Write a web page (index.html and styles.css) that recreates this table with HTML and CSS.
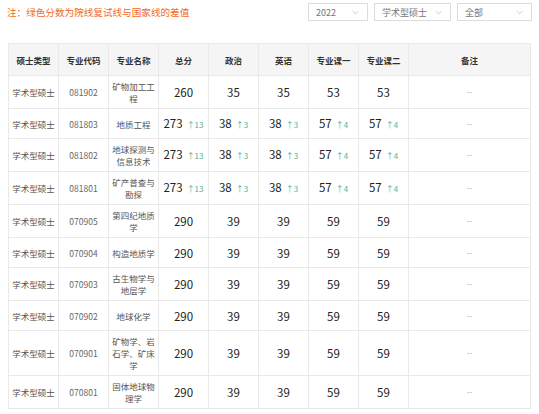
FILE: index.html
```html
<!DOCTYPE html>
<html lang="zh">
<head>
<meta charset="utf-8">
<link rel="stylesheet" href="styles.css">
</head>
<body>
<div class="topbar">
  <div class="note">注：绿色分数为院线复试线与国家线的差值</div>
  <div class="filters">
    <div class="select s1"><span>2022</span><svg class="chev" viewBox="0 0 10 6"><path d="M1 1 L5 5 L9 1" /></svg></div>
    <div class="select s2"><span>学术型硕士</span><svg class="chev" viewBox="0 0 10 6"><path d="M1 1 L5 5 L9 1" /></svg></div>
    <div class="select s3"><span>全部</span><svg class="chev" viewBox="0 0 10 6"><path d="M1 1 L5 5 L9 1" /></svg></div>
  </div>
</div>
<table class="scores">
  <colgroup>
    <col class="c"><col class="c"><col class="c"><col class="c"><col class="c"><col class="c"><col class="c"><col class="c"><col class="last">
  </colgroup>
  <thead>
    <tr><th>硕士类型</th><th>专业代码</th><th>专业名称</th><th>总分</th><th>政治</th><th>英语</th><th>专业课一</th><th>专业课二</th><th>备注</th></tr>
  </thead>
  <tbody>
    <tr><td>学术型硕士</td><td class="code">081902</td><td class="name">矿物加工工程</td><td class="num">260</td><td class="num">35</td><td class="num">35</td><td class="num">53</td><td class="num">53</td><td class="dash">--</td></tr>
    <tr><td>学术型硕士</td><td class="code">081803</td><td class="name">地质工程</td><td class="num">273<span class="up">↑13</span></td><td class="num">38<span class="up">↑3</span></td><td class="num">38<span class="up">↑3</span></td><td class="num">57<span class="up">↑4</span></td><td class="num">57<span class="up">↑4</span></td><td class="dash">--</td></tr>
    <tr><td>学术型硕士</td><td class="code">081802</td><td class="name">地球探测与信息技术</td><td class="num">273<span class="up">↑13</span></td><td class="num">38<span class="up">↑3</span></td><td class="num">38<span class="up">↑3</span></td><td class="num">57<span class="up">↑4</span></td><td class="num">57<span class="up">↑4</span></td><td class="dash">--</td></tr>
    <tr><td>学术型硕士</td><td class="code">081801</td><td class="name">矿产普查与勘探</td><td class="num">273<span class="up">↑13</span></td><td class="num">38<span class="up">↑3</span></td><td class="num">38<span class="up">↑3</span></td><td class="num">57<span class="up">↑4</span></td><td class="num">57<span class="up">↑4</span></td><td class="dash">--</td></tr>
    <tr><td>学术型硕士</td><td class="code">070905</td><td class="name">第四纪地质学</td><td class="num">290</td><td class="num">39</td><td class="num">39</td><td class="num">59</td><td class="num">59</td><td class="dash">--</td></tr>
    <tr><td>学术型硕士</td><td class="code">070904</td><td class="name">构造地质学</td><td class="num">290</td><td class="num">39</td><td class="num">39</td><td class="num">59</td><td class="num">59</td><td class="dash">--</td></tr>
    <tr><td>学术型硕士</td><td class="code">070903</td><td class="name">古生物学与地层学</td><td class="num">290</td><td class="num">39</td><td class="num">39</td><td class="num">59</td><td class="num">59</td><td class="dash">--</td></tr>
    <tr><td>学术型硕士</td><td class="code">070902</td><td class="name">地球化学</td><td class="num">290</td><td class="num">39</td><td class="num">39</td><td class="num">59</td><td class="num">59</td><td class="dash">--</td></tr>
    <tr><td>学术型硕士</td><td class="code">070901</td><td class="name">矿物学、岩石学、矿床学</td><td class="num">290</td><td class="num">39</td><td class="num">39</td><td class="num">59</td><td class="num">59</td><td class="dash">--</td></tr>
    <tr><td>学术型硕士</td><td class="code">070801</td><td class="name">固体地球物理学</td><td class="num">290</td><td class="num">39</td><td class="num">39</td><td class="num">59</td><td class="num">59</td><td class="dash">--</td></tr>
  </tbody>
</table>
</body>
</html>
```
FILE: styles.css
```css
html, body {
  margin: 0;
  padding: 0;
  background: #ffffff;
  font-family: "Noto Sans CJK SC", "Noto Sans", sans-serif;
  color: #555;
}

.topbar {
  display: flex;
  align-items: center;
  justify-content: space-between;
  padding: 3px 7px 0 7px;
  height: 18px;
}

.note {
  font-size: 9.6px;
  color: #f26a1b;
  line-height: 18px;
}

.filters {
  display: flex;
  gap: 6px;
}

.select {
  box-sizing: border-box;
  height: 18px;
  border: 1px solid #dcdcdc;
  display: flex;
  align-items: center;
  justify-content: space-between;
  padding: 0 8px 0 7px;
  font-size: 9px;
  color: #777;
}

.s1 { width: 60px; }
.s2 { width: 77px; }
.s3 { width: 75px; }

.chev {
  width: 7px;
  height: 5px;
  fill: none;
  stroke: #b5b5b5;
  stroke-width: 1;
}

.scores {
  margin: 22px 0 0 8px;
  width: 523px;
  table-layout: fixed;
  border-collapse: collapse;
  border: 1px solid #e6e6e6;
}

.scores col.c { width: 50px; }

.scores th,
.scores td {
  border: 1px solid #e9e9e9;
  text-align: center;
  vertical-align: middle;
  font-size: 8.5px;
  line-height: 12px;
}

.scores th {
  background: #f5f5f5;
  color: #333;
  font-weight: bold;
  height: 31px;
  padding: 0;
}

.scores td {
  height: 30px;
  padding: 4px 3px;
  box-sizing: border-box;
}

.scores td.code {
  color: #666;
}

.scores td.name {
  padding: 4px 3px;
}

.scores td.num {
  font-size: 11.5px;
  color: #222;
}

.up {
  font-size: 8px;
  color: #4fb38f;
  margin-left: 4px;
}

.scores td.dash {
  color: #aaa;
  font-size: 8px;
}
```
